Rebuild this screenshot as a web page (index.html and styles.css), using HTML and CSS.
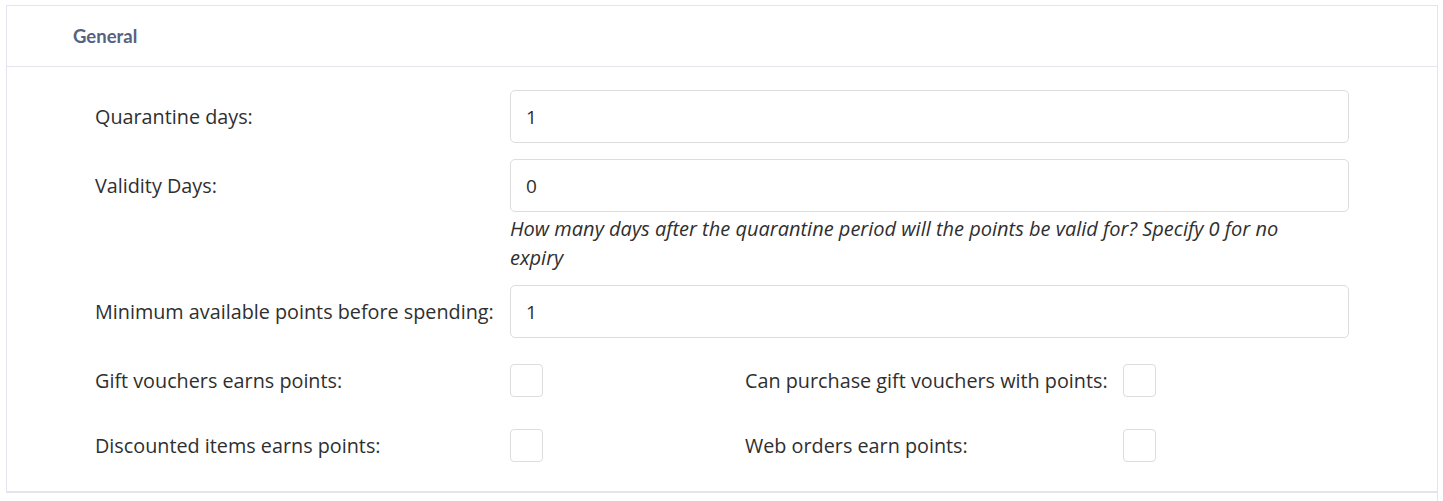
FILE: index.html
```html
<html>
<head>
    <meta charset="UTF-8">
    <meta name="viewport" content="width=device-width, initial-scale=1.0">
    <title>Loyalty settings</title>
    <link rel="stylesheet" href="styles.css">
</head>

<body>
<div class="card">
    <div class="card_head">General</div>
    <div class="card_body">
        <div class="row">
            <label class="label">Quarantine days:</label>
            <div class="field"><input class="input" type="text" value="1"></div>
        </div>
        <div class="row">
            <label class="label">Validity Days:</label>
            <div class="field">
                <input class="input" type="text" value="0">
                <div class="help">How many days after the quarantine period will the points be valid for? Specify 0 for no expiry</div>
            </div>
        </div>
        <div class="row">
            <label class="label">Minimum available points before spending:</label>
            <div class="field"><input class="input" type="text" value="1"></div>
        </div>
        <div class="row row_check">
            <label class="label">Gift vouchers earns points:</label>
            <div class="check_cell"><span class="check"></span></div>
            <label class="label label_2">Can purchase gift vouchers with points:</label>
            <div class="check_cell"><span class="check"></span></div>
        </div>
        <div class="row row_check">
            <label class="label">Discounted items earns points:</label>
            <div class="check_cell"><span class="check"></span></div>
            <label class="label label_2">Web orders earn points:</label>
            <div class="check_cell"><span class="check"></span></div>
        </div>
    </div>
</div>
<div class="card_next"></div>

</body>
</html>
```

FILE: styles.css
```css
* {
    margin: 0;
    padding: 0;
    box-sizing: border-box;
}

body {
    background: #fff;
    padding: 5px 5px 0 6px;
    font-family: "Open Sans", "Noto Sans", sans-serif;
    color: #333;
}

.card {
    border: 1px solid #e4e3ee;
    border-bottom: 2px solid #e4e3ee;
    background: #fff;
}

.card_next {
    height: 20px;
    border-right: 1px solid #e4e3ee;
}

.card_head {
    height: 61px;
    padding: 0 0 0 66px;
    line-height: 60px;
    border-bottom: 1px solid #e4e3ee;
    font-family: Lato, "Open Sans", sans-serif;
    font-size: 18.5px;
    font-weight: 700;
    color: #56627f;
}

.card_body {
    padding: 23px 0 29px 88px;
}

.row {
    display: flex;
    align-items: flex-start;
    margin-bottom: 16px;
}

.label {
    width: 415px;
    font-size: 19.8px;
    line-height: 53px;
    color: #2f2f2f;
    white-space: nowrap;
}

.field {
    width: 839px;
}

.input {
    display: block;
    width: 100%;
    height: 53px;
    padding: 0 15px;
    border: 1px solid #ddd;
    border-radius: 5px;
    font-family: "Open Sans", sans-serif;
    font-size: 19px;
    color: #2f2f2f;
    outline: none;
}

.help {
    padding: 2px 40px 0 0;
    margin-bottom: -3px;
    font-size: 20px;
    font-style: italic;
    line-height: 29px;
    color: #2f2f2f;
}

.row_check {
    align-items: center;
    height: 33px;
    margin: 26px 0 32px;
}

.row_check:last-child {
    margin-bottom: 0;
}

.row_check .label {
    line-height: 33px;
}

.check_cell {
    width: 235px;
}

.row_check .label_2 {
    width: 378px;
}

.check {
    display: block;
    width: 33px;
    height: 33px;
    border: 1px solid #ddd;
    border-radius: 4px;
}
```
